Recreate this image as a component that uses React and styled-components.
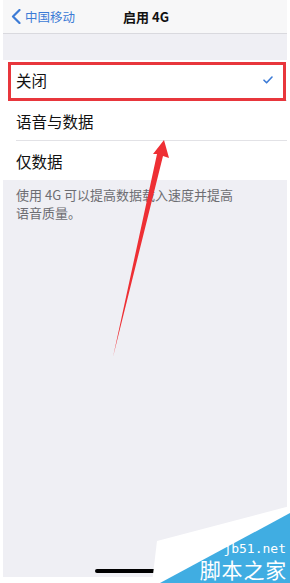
import styled, { createGlobalStyle } from "styled-components";

const GlobalStyle = createGlobalStyle`
  html, body {
    margin: 0;
    padding: 0;
    background: #fff;
  }
  body {
    font-family: "Noto Sans CJK SC", "Noto Sans", sans-serif;
  }
`;

const Page = styled.div`
  position: relative;
  width: 290px;
  height: 583px;
  overflow: hidden;
  background: #fff;
`;

const Phone = styled.div`
  display: flex;
  flex-direction: column;
  width: 284px;
  height: 577px;
  margin-left: 3px;
  background: #efeff4;
`;

const NavBar = styled.div`
  position: relative;
  display: flex;
  align-items: center;
  justify-content: center;
  height: 33px;
  background: #f7f7f8;
  border-bottom: 1px solid #d9d9de;
`;

const BackButton = styled.div`
  position: absolute;
  left: 8px;
  top: 0;
  bottom: 0;
  display: flex;
  align-items: center;
  gap: 4px;
  color: #3c7bd6;
  font-size: 12.5px;
`;

const Title = styled.div`
  font-size: 13px;
  font-weight: 700;
  color: #111;
  margin-left: 2px;
`;

const Group = styled.div`
  margin-top: 26px;
  background: #fff;
`;

const Row = styled.div`
  display: flex;
  align-items: center;
  justify-content: space-between;
  height: 40px;
  margin-left: 13px;
  padding-right: 14px;
  font-size: 15.5px;
  color: #111;
  border-top: ${(p) => (p.$first ? "none" : "1px solid #e2e2e6")};
  box-sizing: border-box;
`;

const Footer = styled.div`
  padding: 6px 13px 0;
  font-size: 13px;
  line-height: 18px;
  color: #6d6d72;
`;

const Spacer = styled.div`
  flex: 1;
`;

const HomeBar = styled.div`
  align-self: center;
  width: 100px;
  height: 4px;
  border-radius: 2px;
  background: #000;
  margin-bottom: 4px;
`;

const Highlight = styled.div`
  position: absolute;
  left: 8px;
  top: 62px;
  width: 272px;
  height: 33px;
  border: 3px solid #e8363c;
`;

const Overlay = styled.svg`
  position: absolute;
  left: 0;
  top: 0;
  pointer-events: none;
`;

const Watermark = styled.div`
  position: absolute;
  right: 3px;
  bottom: 2px;
  display: flex;
  flex-direction: column;
  align-items: flex-end;
  gap: 2px;
  color: #fff;
`;

const Domain = styled.div`
  font-family: "DejaVu Sans Mono", "Liberation Mono", monospace;
  font-size: 13px;
  line-height: 13px;
  margin-right: 1px;
`;

const Brand = styled.div`
  font-size: 21px;
  line-height: 24px;
  letter-spacing: 0.8px;
`;

const Check = () => (
  <svg width="10" height="8" viewBox="0 0 10 8">
    <path d="M1 4.2 L3.6 6.8 L9 1" fill="none" stroke="#3c7bd6" strokeWidth="1.6" strokeLinecap="round" strokeLinejoin="round" />
  </svg>
);

const Chevron = () => (
  <svg width="10" height="15" viewBox="0 0 10 15">
    <path d="M8.5 1 L2 7.5 L8.5 14" fill="none" stroke="#3c7bd6" strokeWidth="2.2" strokeLinecap="round" strokeLinejoin="round" />
  </svg>
);

const options = ["关闭", "语音与数据", "仅数据"];

export default function App() {
  return (
    <Page>
      <GlobalStyle />
      <Phone>
        <NavBar>
          <BackButton>
            <Chevron />
            <span>中国移动</span>
          </BackButton>
          <Title>启用 4G</Title>
        </NavBar>
        <Group>
          {options.map((label, i) => (
            <Row key={label} $first={i === 0}>
              <span>{label}</span>
              {i === 0 && <Check />}
            </Row>
          ))}
        </Group>
        <Footer>
          使用 4G 可以提高数据载入速度并提高
          <br />
          语音质量。
        </Footer>
        <Spacer />
        <HomeBar />
      </Phone>
      <Highlight />
      <Overlay width="290" height="583" viewBox="0 0 290 583">
        <polygon points="164,140 153,154 157,154 113,357 163,156 169,158" fill="#ee2f34" />
        <polygon points="157,541 290,506 290,583 152,583" fill="#fff" />
        <polygon points="160,583 290,513 290,583" fill="#40ade2" />
      </Overlay>
      <Watermark>
        <Domain>jb51.net</Domain>
        <Brand>脚本之家</Brand>
      </Watermark>
    </Page>
  );
}
